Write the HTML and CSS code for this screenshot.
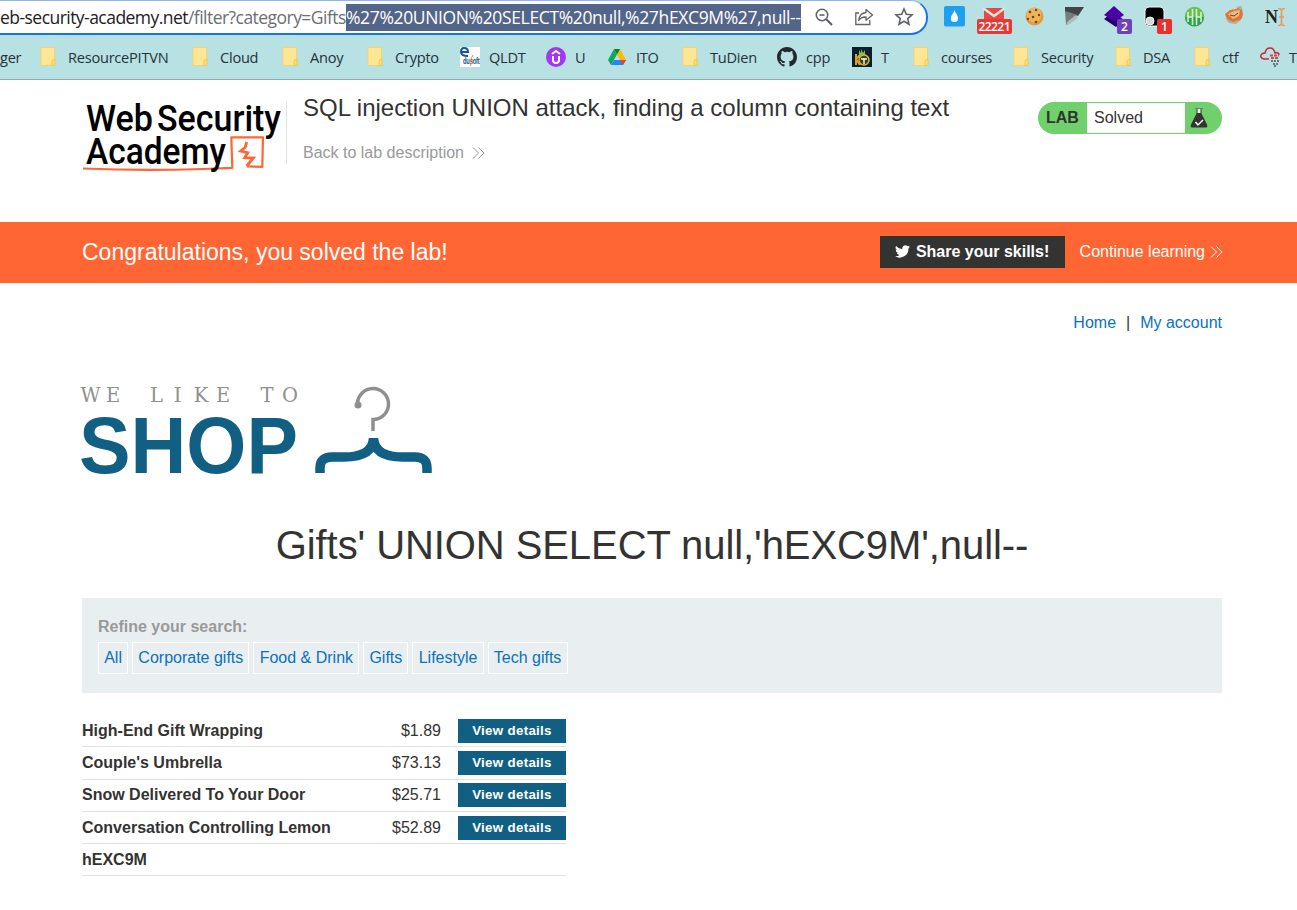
FILE: index.html
```html
<!DOCTYPE html>
<html lang="en">
<head>
<meta charset="utf-8">
<title>SQL injection UNION attack, finding a column containing text</title>
<link rel="stylesheet" href="styles.css">
</head>
<body>
<svg class="defs" width="0" height="0">
  <symbol id="folder" viewBox="0 0 16 20">
    <path d="M1 .5h13.500v12v6H1z" fill="#ffe694" stroke="#f3d36b"/>
    <path d="M12 18.500v-4q0-2 3-2.500v6.500z" fill="#ffdf70" stroke="#edc653"/>
  </symbol>
  <symbol id="chevrons" viewBox="0 0 13 12">
    <path d="M1 .5 6.500 6 1 11.500M6.500.5 12 6l-5.500 5.500" fill="none" stroke="currentColor" stroke-width="1"/>
  </symbol>
</svg>

<div class="browser">
  <div class="toolbar">
    <div class="omnibox">
      <div class="url"><span class="host">eb-security-academy.net</span><span class="path">/filter?category=Gifts</span></div>
      <div class="selected"><span>%27%20UNION%20SELECT%20null,%27hEXC9M%27,null--</span></div>
      <div class="actions">
        <svg width="20" height="20" viewBox="0 0 20 20" fill="none" stroke="#5f6368" stroke-width="1.600"><circle cx="8" cy="8" r="5.700"/><path d="M12.300 12.300 18 18" stroke-width="2.200"/><path d="M5.500 8h5"/></svg>
        <svg width="20" height="20" viewBox="0 0 20 20" fill="none" stroke="#5f6368" stroke-width="1.300"><path d="M5 6H1.800v11.500h14V13"/><path d="M12 2.500 18.500 8 12 13.200V10q-5-.2-7.300 3.500Q5.500 6 12 5.500z" stroke-linejoin="round"/></svg>
        <svg width="20" height="20" viewBox="0 0 20 20" fill="none" stroke="#5f6368" stroke-width="1.600"><path d="m10 2 2.300 5.300 5.700.5-4.300 3.800 1.300 5.700-5-3-5 3 1.300-5.700L2 7.800l5.700-.5z"/></svg>
      </div>
    </div>
    <div class="extensions">
      <svg viewBox="0 0 40 36"><rect x="10" y="6" width="21" height="20.500" rx="2" fill="#1d9ff2"/><path d="M20.500 10c1 3 3.500 5.500 3.500 8.500a3.600 3.600 0 0 1-7.200 0c0-3 3-5.500 3.700-8.500z" fill="#fff"/></svg>
      <svg viewBox="0 0 40 36"><path d="M10 8h20v12H10z" fill="#e64a42"/><path d="m9 8 11 8L31 8" fill="none" stroke="#d9e5e2" stroke-width="2.500"/><path d="M12 8h16l-8 5.500z" fill="#e64a42"/><rect x="3" y="19" width="35" height="15" rx="2" fill="#e53935"/><text class="badge" x="20.500" y="31.300" textLength="32">22221</text></svg>
      <svg viewBox="0 0 40 36"><circle cx="20.500" cy="16.500" r="9" fill="#e29a3d"/><circle cx="20" cy="15" r="7.500" fill="#efb35a"/><g fill="#75441d"><circle cx="16" cy="12" r="1.300"/><circle cx="22" cy="10" r="1.200"/><circle cx="25" cy="15" r="1.200"/><circle cx="19" cy="17" r="1.300"/><circle cx="14" cy="19" r="1.200"/><circle cx="22" cy="22" r="1.300"/></g></svg>
      <svg viewBox="0 0 40 36"><path d="M11 7h19l-6 9-13-4z" fill="#424547"/><path d="m11 11 13 4-12 10z" fill="#777d7f"/><path d="m13 22 9-7 2 3-10 7q-2 0-1-3z" fill="#b0bbbd"/></svg>
      <svg viewBox="0 0 40 36"><path d="m10 19 9-7 11 8-8 7z" fill="#27006f"/><path d="m20 6 10 9-9 6-11-6z" fill="#4b00a5"/><rect x="23" y="19" width="15" height="15" rx="2" fill="#7042b8"/><text class="badge" x="30.500" y="31.300">2</text></svg>
      <svg viewBox="0 0 40 36"><rect x="11" y="7" width="19" height="19" rx="4" fill="#000" stroke="#edf7f7"/><circle cx="16" cy="21" r="4" fill="#c7ddde" stroke="#fff"/><rect x="23" y="19" width="15" height="15" rx="2" fill="#e8302e"/><text class="badge" x="30.500" y="31.300">1</text></svg>
      <svg viewBox="0 0 40 36"><circle cx="20.500" cy="16.500" r="9.700" fill="#6cc04a"/><path d="M11 17a9.500 9.500 0 0 0 19 0z" fill="#2aa54b"/><path d="M14 12v10M18.500 9v16M22.500 9v16M27 12v10M14 17h4.500M22.500 17h4.500" stroke="#d4f0dc" stroke-width="1.600"/></svg>
      <svg viewBox="0 0 40 36"><path d="m11 14 5-4 6-1 5-3 2 8q-1 8-8 9-8-1-10-9z" fill="#dd7830"/><path d="m14 14 6-3 6-1-1 6-6 3z" fill="#f3b67b"/><path d="m11 18 8 4 8-3-5 5-7-1zM22 7l5-1 2 5" fill="#b7aaa0"/><path d="m16 15 4 1 4-3" stroke="#70432f" fill="none"/></svg>
      <svg viewBox="0 0 40 36"><text class="n-mark" x="11" y="22.500" textLength="13" lengthAdjust="spacingAndGlyphs">N</text><path d="M24 8.500q3.500 0 3.500 2v13q0 2-3.500 2m7-17q-3.500 0-3.500 2m0 13q0 2 3.500 2M25 17h5" fill="none" stroke="#ed9854" stroke-width="1.600"/></svg>
    </div>
  </div>
  <div class="bookmarks">
    <div class="bm first"><span>ger</span></div>
    <div class="bm"><svg class="fi"><use href="#folder"/></svg><span>ResourcePITVN</span></div>
    <div class="bm"><svg class="fi"><use href="#folder"/></svg><span>Cloud</span></div>
    <div class="bm"><svg class="fi"><use href="#folder"/></svg><span>Anoy</span></div>
    <div class="bm"><svg class="fi"><use href="#folder"/></svg><span>Crypto</span></div>
    <div class="bm wide"><svg viewBox="0 0 20 20"><path d="M0 0h20v20H0z" fill="#fff"/><path d="M2 5h6q0-4-4-4-3 0-3 4t7 4" fill="none" stroke="#16559f" stroke-width="2"/><text class="edu" x="3" y="16.500" textLength="16.500" lengthAdjust="spacingAndGlyphs">dusoft</text><path d="m13 8-3 6h3l-3 5" stroke="#ef8a2f" fill="none"/></svg><span>QLDT</span></div>
    <div class="bm wide"><svg viewBox="0 0 20 20"><circle cx="10" cy="10" r="10" fill="#a435f0"/><path d="m6 7 4-3 4 3M7 9v4q0 3 3 3t3-3V9" fill="none" stroke="#fff" stroke-width="2"/></svg><span>U</span></div>
    <div class="bm wide"><svg viewBox="0 0 20 20"><path d="M7 2 1 13l3 5 6-10.500z" fill="#0da960"/><path d="M7 2h6l6 11h-6z" fill="#ffba00"/><path d="M7 13h12l-3 5H4z" fill="#2684fc"/><path d="M13 13h6l-3 5z" fill="#ea4335"/><path d="M7 2h6l-3 5.500z" fill="#00832d"/></svg><span>ITO</span></div>
    <div class="bm"><svg class="fi"><use href="#folder"/></svg><span>TuDien</span></div>
    <div class="bm wide"><svg viewBox="0 0 16 16"><path fill="#24292f" d="M8 0C3.580 0 0 3.580 0 8c0 3.540 2.290 6.530 5.470 7.590.4.070.55-.17.55-.38 0-.19-.01-.82-.01-1.490-2.010.37-2.530-.49-2.690-.94-.09-.23-.48-.94-.82-1.130-.28-.15-.68-.52-.01-.53.63-.01 1.080.58 1.230.82.72 1.210 1.870.87 2.330.66.07-.52.28-.87.51-1.070-1.780-.2-3.640-.89-3.640-3.950 0-.87.31-1.590.82-2.150-.08-.2-.36-1.020.08-2.120 0 0 .67-.21 2.200.82a7.500 7.500 0 0 1 4 0c1.530-1.040 2.200-.82 2.200-.82.44 1.100.16 1.920.08 2.120.51.56.82 1.270.82 2.150 0 3.070-1.870 3.750-3.650 3.950.29.25.54.73.54 1.480 0 1.070-.01 1.930-.01 2.200 0 .21.15.46.55.38A8 8 0 0 0 16 8c0-4.420-3.580-8-8-8z"/></svg><span>cpp</span></div>
    <div class="bm wide"><svg viewBox="0 0 20 20"><path d="M0 0h20v20H0z" fill="#08202d"/><path d="M7 8V3l2 3V2l2 4 2-3v4l3 3-8 1z" fill="#8abb45"/><path d="M4 7v11M4 12l4-4M4 12l4 6" stroke="#e0a020" stroke-width="2"/><circle cx="12" cy="13" r="5" fill="#3b3d28" stroke="#d6b343" stroke-width="1.500"/><path d="M9 12h6M12 11v6" stroke="#f6f1d8" stroke-width="1.500"/></svg><span>T</span></div>
    <div class="bm"><svg class="fi"><use href="#folder"/></svg><span>courses</span></div>
    <div class="bm"><svg class="fi"><use href="#folder"/></svg><span>Security</span></div>
    <div class="bm"><svg class="fi"><use href="#folder"/></svg><span>DSA</span></div>
    <div class="bm"><svg class="fi"><use href="#folder"/></svg><span>ctf</span></div>
    <div class="bm wide"><svg viewBox="0 0 20 20"><path d="M9 12H4q-4-1-3-4 1-2 4-2 1-5 5-5t5 5q4-1 4 2" fill="none" stroke="#c9272d" stroke-width="1.500"/><path d="M10 8.500h9M11 11h8" stroke="#ce4a4c" stroke-width="2" stroke-dasharray="3 1"/><path d="M11 14h8M13 17h6M14 19h3" stroke="#657980" stroke-width="1.800" stroke-dasharray="2 1"/></svg><span>T</span></div>
  </div>
</div>

<header class="lab-header">
  <svg class="academy" width="204" height="80" viewBox="0 0 204 80">
    <g class="academy-text"><text x="4" y="38.500" textLength="67" lengthAdjust="spacingAndGlyphs">Web</text><text x="75" y="38.500" textLength="124" lengthAdjust="spacingAndGlyphs">Security</text></g>
    <path d="M1 76.500q60 2.500 120 .5l29.300-1.200-1-30.500 31.700 0-.7 29.500-15.600-.5" fill="none" stroke="#ff6633" stroke-width="2.200" stroke-linejoin="round"/>
    <text class="academy-text" x="4" y="71.500" textLength="140" lengthAdjust="spacingAndGlyphs">Academy</text>
    <path d="m164.700 50-1.500 5.300-4.500 3.700 7 1.700-3 5 8.600.3-6.600 8" fill="none" stroke="#ff6633" stroke-width="2.800"/>
  </svg>
  <div class="lab-title">
    <h2>SQL injection UNION attack, finding a column containing text</h2>
    <a>Back to lab description <svg width="13" height="12"><use href="#chevrons"/></svg></a>
  </div>
  <div class="lab-status">
    <strong>LAB</strong><span>Solved</span>
    <svg width="36" height="32" viewBox="0 0 36 32"><path d="M10 6.500h8" stroke="#777"/><path d="M11.500 7h5v4.500l5.500 11q1 3-1 3h-14q-2 0-1-3l5.500-11z" fill="#333332"/><path d="M12.500 7h3v4h-3z" fill="#e9f7e6"/><path d="m10.500 20 2.500 3 5-5" fill="none" stroke="#fff" stroke-width="1.500"/></svg>
  </div>
</header>

<section class="banner">
  <h4>Congratulations, you solved the lab!</h4>
  <a class="share"><svg width="15" height="13" viewBox="0 0 24 20"><path fill="#fff" d="M24 2.400a10 10 0 0 1-2.800.8A5 5 0 0 0 23.300.5a10 10 0 0 1-3.100 1.200 4.900 4.900 0 0 0-8.400 4.500A14 14 0 0 1 1.700 1a4.900 4.900 0 0 0 1.500 6.600A5 5 0 0 1 1 7v.1A4.900 4.900 0 0 0 4.900 12a5 5 0 0 1-2.200.1 4.900 4.900 0 0 0 4.600 3.400A10 10 0 0 1 0 17.500 14 14 0 0 0 21.500 5z"/></svg>Share your skills!</a>
  <a class="continue">Continue learning <svg width="13" height="12"><use href="#chevrons"/></svg></a>
</section>

<main class="page">
  <nav class="nav"><a>Home</a><span>|</span><a>My account</a></nav>
  <svg class="shop" width="352" height="92" viewBox="0 0 352 92">
    <text class="we" y="18.500" x="8.500 31 52 74.500 95.500 119 141 163 185 208">WE LIKE TO</text>
    <text class="shop-word" x="-3" y="89.500" textLength="219" lengthAdjust="spacingAndGlyphs">SHOP</text>
    <path d="M275.500 21a15.500 15.500 0 1 1 16.500 15.500h-1V48" fill="none" stroke="#8f8f8f" stroke-width="3.500"/>
    <circle cx="276" cy="22" r="3.500" fill="#8f8f8f"/>
    <path d="M238 90v-5q0-11 12-11h12q29 0 29.500-19Q292 74 321 74h12q12 0 12 11v5" fill="none" stroke="#125f84" stroke-width="9.500" stroke-linejoin="bevel"/>
  </svg>
  <h1>Gifts' UNION SELECT null,'hEXC9M',null--</h1>
  <section class="filters">
    <label>Refine your search:</label>
    <div class="chips"><a>All</a><a>Corporate gifts</a><a>Food &amp; Drink</a><a>Gifts</a><a>Lifestyle</a><a>Tech gifts</a></div>
  </section>
  <div class="products">
    <div class="row"><b>High-End Gift Wrapping</b><span>$1.89</span><a>View details</a></div>
    <div class="row"><b>Couple's Umbrella</b><span>$73.13</span><a>View details</a></div>
    <div class="row"><b>Snow Delivered To Your Door</b><span>$25.71</span><a>View details</a></div>
    <div class="row"><b>Conversation Controlling Lemon</b><span>$52.89</span><a>View details</a></div>
    <div class="row"><b>hEXC9M</b></div>
  </div>
</main>
</body>
</html>
```
FILE: styles.css
```css
* { box-sizing: border-box; }
body { margin: 0; height: 910px; overflow: hidden; background: #fff; color: #333332; font: 16px/20px "Liberation Sans", Arial, sans-serif; }
h1, h2, h4 { margin: 0; font-weight: 400; }
.defs { position: absolute; }
.browser { height: 80px; background: #b8e1e4; border-bottom: 1px solid #8fabb0; font-family: "Open Sans", "Noto Sans", sans-serif; overflow: hidden; }
.toolbar { display: flex; height: 36px; }
.omnibox { display: flex; align-items: center; width: 928px; height: 35px; background: #fff; border-top: 1px solid #8db5f2; border-bottom: 2px solid #1a73e8; border-right: 2px solid #1a73e8; border-radius: 0 17px 17px 0; font-size: 17.5px; line-height: 26px; white-space: nowrap; }
.url { width: 346px; letter-spacing: -0.54px; }
.host { color: #202124; }
.path { color: #6b6f73; }
.selected { width: 455px; height: 27px; background: #54658a; color: #fff; letter-spacing: -0.36px; }
.actions { display: flex; gap: 20px; margin-left: 13px; }
.extensions { display: flex; margin-left: 6px; }
.extensions svg { width: 40px; height: 36px; flex: none; }
.badge { font: 600 12px "Open Sans", sans-serif; fill: #fff; text-anchor: middle; }
.n-mark { font: 700 18px "Liberation Serif", serif; fill: #222; }
.edu { font: 700 9px "Liberation Sans", sans-serif; fill: #174f8e; }
.bookmarks { display: grid; grid-template-columns: 40px 152px 90px 85px 93px 86px 61px 75px 95px 75px 61px 100px 102px 79px 66px 37px; height: 42px; color: #263238; font-size: 14.6px; letter-spacing: -0.25px; white-space: nowrap; }
.bm { display: flex; align-items: center; gap: 12px; }
.bm.wide { gap: 9px; }
.bm svg { flex: none; width: 20px; height: 20px; }
.bm svg.fi { width: 16px; height: 20px; }
.lab-header { display: flex; height: 142px; padding: 12px 75px 0 82px; }
.academy { flex: none; overflow: visible; }
.academy-text { font: 500 37px Roboto, sans-serif; fill: #000; }
.lab-title { flex: 1; height: 62px; margin-top: 10px; padding-left: 16px; border-left: 1px solid #e2e2e2; }
.lab-title h2 { font-size: 24px; line-height: 28px; margin-top: -8px; white-space: nowrap; }
.lab-title a { display: flex; align-items: center; gap: 8px; margin-top: 21px; color: #999; }
.lab-title svg { margin-top: -1px; }
.lab-status { display: flex; width: 184px; height: 32px; margin-top: 10px; border-radius: 16px; background: #70d16c; line-height: 32px; overflow: hidden; }
.lab-status strong { width: 49px; padding-left: 8px; }
.lab-status span { width: 98px; height: 30px; margin-top: 1px; padding-left: 7px; background: #fff; line-height: 30px; }
.banner { display: flex; align-items: center; height: 61px; padding: 0 74px 2px 82px; background: #ff6633; color: #fff; }
.banner h4 { flex: 1; font-size: 23px; }
.share { display: flex; align-items: center; justify-content: center; gap: 6px; width: 185px; height: 32px; margin-right: 15px; background: #333332; font-weight: 700; white-space: nowrap; }
.continue { display: flex; align-items: center; gap: 5px; }
.page { width: 1140px; margin-left: 82px; }
.nav { display: flex; justify-content: flex-end; gap: 10px; padding-top: 30px; color: #333332; }
.nav a { color: #0b71b8; }
.shop { display: block; margin-top: 50px; overflow: visible; }
.we { font: 19.5px "DejaVu Serif", serif; fill: #909090; text-anchor: middle; }
.shop-word { font: 700 80px "Liberation Sans", sans-serif; fill: #125f84; }
h1 { margin-top: 45px; font-size: 40px; line-height: 50px; letter-spacing: -0.08px; text-align: center; white-space: nowrap; }
.filters { height: 95px; margin-top: 28px; padding: 19px 16px; background: #e9eff1; }
.filters label { display: block; height: 20px; color: #999; font-weight: 700; }
.chips { display: flex; gap: 4px; margin-top: 5px; color: #0b71b8; }
.chips a { height: 32px; padding: 0 5.2px; border: 1px solid #fff; line-height: 29px; }
.products { width: 484px; margin-top: 22px; }
.row { display: grid; grid-template-columns: 1fr 80px 108px; align-items: center; height: 32.3px; border-bottom: 1px solid #e2e2e2; }
.row span { padding-right: 17px; text-align: right; }
.row a { height: 24px; background: #125f84; color: #fff; font-size: 13.33px; letter-spacing: 0.3px; font-weight: 700; line-height: 23px; text-align: center; }
```
